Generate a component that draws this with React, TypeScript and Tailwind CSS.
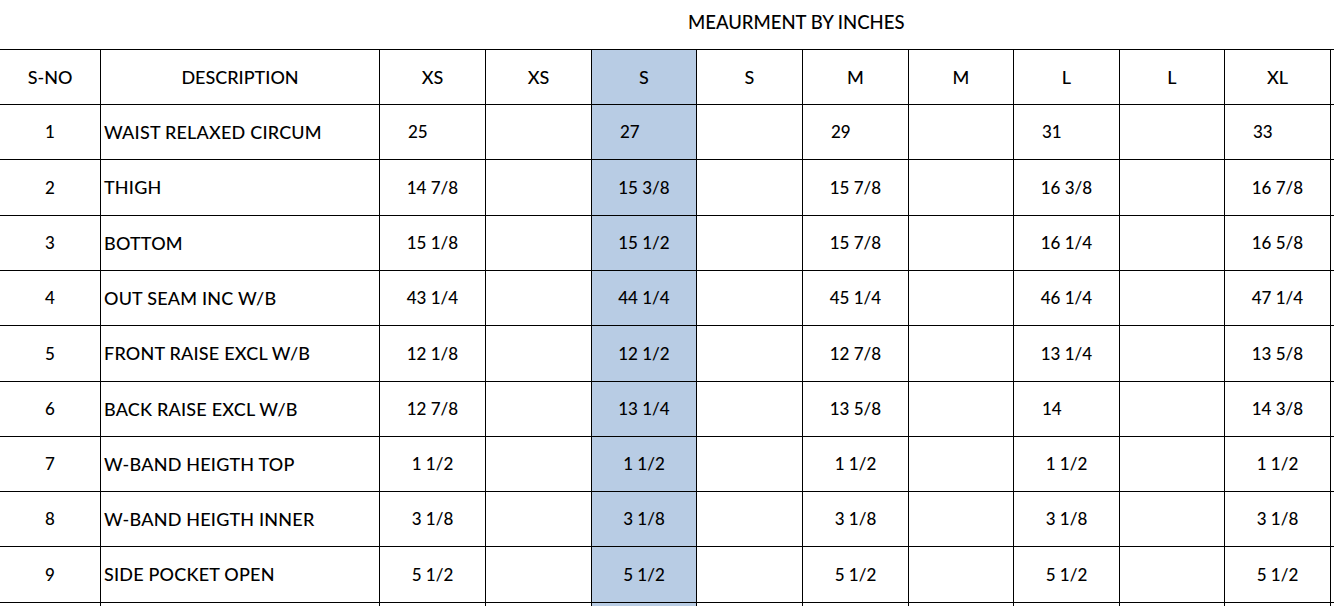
const sizes = ["XS", "XS", "S", "S", "M", "M", "L", "L", "XL", ""];

// widths include the 1px right border of each cell
const colW = ["w-[106px]", "w-[106px]", "w-[105px]", "w-[106px]", "w-[106px]", "w-[105px]", "w-[106px]", "w-[105px]", "w-[106px]", "w-[106px]"];

type Row = { no: number; desc: string; vals: (string | [string, "left"])[]; h: string };

const rows: Row[] = [
  { no: 1, desc: "WAIST RELAXED CIRCUM", h: "h-[55px]", vals: [["25", "left"], ["27", "left"], ["29", "left"], ["31", "left"], ["33", "left"]] },
  { no: 2, desc: "THIGH", h: "h-[56px]", vals: ["14 7/8", "15 3/8", "15 7/8", "16 3/8", "16 7/8"] },
  { no: 3, desc: "BOTTOM", h: "h-[55px]", vals: ["15 1/8", "15 1/2", "15 7/8", "16 1/4", "16 5/8"] },
  { no: 4, desc: "OUT SEAM INC W/B", h: "h-[55px]", vals: ["43 1/4", "44 1/4", "45 1/4", "46 1/4", "47 1/4"] },
  { no: 5, desc: "FRONT RAISE EXCL W/B", h: "h-[56px]", vals: ["12 1/8", "12 1/2", "12 7/8", "13 1/4", "13 5/8"] },
  { no: 6, desc: "BACK RAISE EXCL W/B", h: "h-[55px]", vals: ["12 7/8", "13 1/4", "13 5/8", ["14", "left"], "14 3/8"] },
  { no: 7, desc: "W-BAND HEIGTH TOP", h: "h-[55px]", vals: ["1 1/2", "1 1/2", "1 1/2", "1 1/2", "1 1/2"] },
  { no: 8, desc: "W-BAND HEIGTH INNER", h: "h-[55px]", vals: ["3 1/8", "3 1/8", "3 1/8", "3 1/8", "3 1/8"] },
  { no: 9, desc: "SIDE POCKET OPEN", h: "h-[56px]", vals: ["5 1/2", "5 1/2", "5 1/2", "5 1/2", "5 1/2"] },
];

function Cell({ i, children, left }: { i: number; children?: React.ReactNode; left?: boolean }) {
  const blue = i === 2 ? "bg-[#b8cce4]" : "";
  return (
    <div
      className={`${colW[i]} ${blue} flex shrink-0 items-center border-r border-black ${
        left ? "justify-start pl-[28px]" : "justify-center"
      }`}
    >
      {children}
    </div>
  );
}

export default function App() {
  return (
    <div className="h-[606px] w-[1334px] overflow-hidden bg-white text-[17px] font-medium text-black [font-family:Lato,'Open_Sans',sans-serif]">
      <div className="h-[49px] pt-[9px] pl-[688px] text-[18.5px]">MEAURMENT BY INCHES</div>

      <div className="w-[1400px]">
        {/* header */}
        <div className="flex h-[56px] border-y border-black text-[18px]">
          <div className="flex w-[101px] shrink-0 items-center justify-center border-r border-black">S-NO</div>
          <div className="flex w-[279px] shrink-0 items-center justify-center border-r border-black">DESCRIPTION</div>
          {sizes.map((s, i) => (
            <Cell key={i} i={i}>
              {s}
            </Cell>
          ))}
        </div>

        {rows.map((r) => (
          <div key={r.no} className={`flex ${r.h} border-b border-black`}>
            <div className="flex w-[101px] shrink-0 items-center justify-center border-r border-black">{r.no}</div>
            <div className="flex w-[279px] shrink-0 items-center border-r border-black pl-[3px] text-[18px] tracking-[0.2px]">
              {r.desc}
            </div>
            {sizes.map((_, i) => {
              const v = i % 2 === 0 ? r.vals[i / 2] : undefined;
              if (Array.isArray(v)) {
                return (
                  <Cell key={i} i={i} left>
                    {v[0]}
                  </Cell>
                );
              }
              return (
                <Cell key={i} i={i}>
                  {v}
                </Cell>
              );
            })}
          </div>
        ))}

        {/* next row, cut off by the window */}
        <div className="flex h-[55px]">
          <div className="w-[101px] shrink-0 border-r border-black" />
          <div className="w-[279px] shrink-0 border-r border-black" />
          {sizes.map((_, i) => (
            <Cell key={i} i={i} />
          ))}
        </div>
      </div>
    </div>
  );
}
